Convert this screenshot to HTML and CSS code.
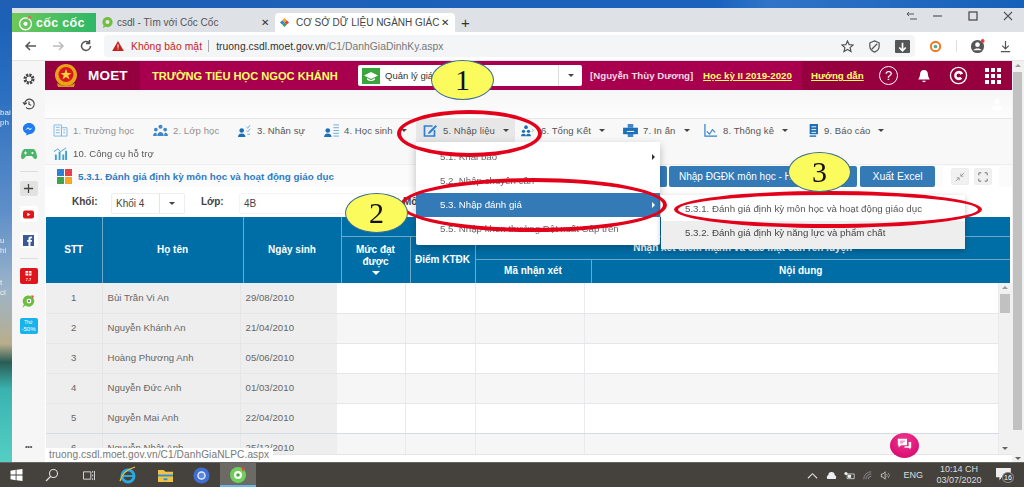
FILE: index.html
```html
<!DOCTYPE html>
<html lang="vi">
<head>
<meta charset="utf-8">
<title>CƠ SỞ DỮ LIỆU NGÀNH GIÁO DỤC</title>
<link rel="stylesheet" href="styles.css">
</head>
<body>
<div class="desktop">
  <div class="top-strip"></div>
  <div class="work">
    <div class="wall"><span class="w1">bai<br>ph</span><span class="w2">u<br>hi</span><span class="w3">t<br>cl</span></div>
    <div class="browser">
      <div class="tabs">
        <div class="brand"><svg class="brand-ic" viewBox="0 0 20 20"><circle cx="10" cy="11" r="7" fill="none" stroke="#fff" stroke-width="1.600"/><circle cx="10" cy="11" r="2.500" fill="#fff"/><path d="M12 5l3-4 2 3z" fill="#f55"/></svg><span>cốc cốc</span></div>
        <div class="tab"><svg class="tab-ic" viewBox="0 0 14 14"><circle cx="7" cy="6.500" r="5.500" fill="#6fbf3f"/><circle cx="7" cy="6.500" r="2.200" fill="#e8e8e8"/><path d="M3 10l-1 3 3-1.500z" fill="#6fbf3f"/></svg><span class="tab-t">csdl - Tìm với Cốc Cốc</span><span class="x">✕</span></div>
        <div class="tab on"><svg class="tab-ic small" viewBox="0 0 10 10"><path d="M5 0l2.500 2.500L5 5 2.500 2.500z" fill="#f5a623"/><path d="M5 5l2.500-2.500L10 5 7.500 7.500z" fill="#e8404a"/><path d="M5 5l2.500 2.500L5 10 2.500 7.500z" fill="#3fa34d"/><path d="M0 5l2.500-2.500L5 5 2.500 7.500z" fill="#2f80d0"/></svg><span class="tab-t">CƠ SỞ DỮ LIỆU NGÀNH GIÁC</span><span class="x">✕</span></div>
        <span class="plus">+</span>
        <div class="win-ctl">
          <svg class="wc-first" viewBox="0 0 12 10"><path d="M1 3h7M3 1L1 3l2 2M4 8h7" fill="none" stroke="#555" stroke-width="1"/></svg>
          <svg viewBox="0 0 12 10"><path d="M1 5h9" stroke="#555" stroke-width="1.200"/></svg>
          <svg viewBox="0 0 12 10"><rect x="2" y="1" width="8" height="8" fill="none" stroke="#444" stroke-width="1.200"/></svg>
          <svg viewBox="0 0 12 10"><path d="M2 1l8 8M10 1l-8 8" stroke="#555" stroke-width="1.100"/></svg>
        </div>
      </div>
      <div class="toolbar">
        <svg class="nav-ic" viewBox="0 0 14 14"><path d="M12 7H2M6 3L2 7l4 4" fill="none" stroke="#555" stroke-width="1.500"/></svg>
        <svg class="nav-ic" viewBox="0 0 14 14"><path d="M2 7h10M8 3l4 4-4 4" fill="none" stroke="#bbb" stroke-width="1.500"/></svg>
        <svg class="nav-ic" viewBox="0 0 14 14"><path d="M11.500 7A4.500 4.500 0 1 1 10 3.600M10.500 1v3.500H7" fill="none" stroke="#555" stroke-width="1.500"/></svg>
        <div class="omni">
          <svg class="warn" viewBox="0 0 14 12"><path d="M7 0l7 12H0z" fill="#c5221f"/><path d="M6.400 4h1.200v4H6.400zM6.400 9h1.200v1.200H6.400z" fill="#fff"/></svg>
          <span class="insecure">Không bảo mật</span><i class="sep"></i>
          <span class="url"><b>truong.csdl.moet.gov.vn</b>/C1/DanhGiaDinhKy.aspx</span>
          <svg class="o-ic" viewBox="0 0 14 14"><path d="M7 1l1.800 4 4.200.4-3.200 2.800 1 4.200L7 10.200 3.200 12.400l1-4.200L1 5.400 5.200 5z" fill="none" stroke="#555" stroke-width="1.300"/></svg>
          <svg class="o-ic" viewBox="0 0 14 14"><path d="M7 1l5 2v4c0 3-2.500 5-5 6-2.500-1-5-3-5-6V3zM4 10l6-6" fill="none" stroke="#555" stroke-width="1.300"/></svg>
          <span class="dl-tile"><svg viewBox="0 0 14 14"><path d="M7 2v8M3.500 7L7 10.500 10.500 7" fill="none" stroke="#fff" stroke-width="1.800"/></svg></span>
        </div>
        <svg class="ext" viewBox="0 0 14 14"><circle cx="7" cy="7" r="5" fill="none" stroke="#ef7d22" stroke-width="2.200"/><circle cx="7" cy="7" r="2" fill="#5a9"/></svg>
        <i class="sep2"></i>
        <svg class="ext prof" viewBox="0 0 16 16"><circle cx="8" cy="8" r="7" fill="#555"/><circle cx="8" cy="6" r="2.500" fill="#fff"/><path d="M3.500 12c1.500-2.500 7.500-2.500 9 0" fill="#fff"/><circle cx="13.500" cy="2" r="2" fill="#f33"/></svg>
        <svg class="ext" viewBox="0 0 14 14"><path d="M7 1v8M3.500 6L7 9.500 10.500 6M2 12.500h10" fill="none" stroke="#555" stroke-width="1.300"/></svg>
      </div>
      <div class="viewport">
        <aside class="side">
          <svg class="s-ic" viewBox="0 0 16 16"><circle cx="8" cy="8" r="5" fill="none" stroke="#444" stroke-width="2.600" stroke-dasharray="2.500 1.400"/><circle cx="8" cy="8" r="3.500" fill="none" stroke="#444" stroke-width="1.100"/></svg>
          <svg class="s-ic" viewBox="0 0 16 16"><path d="M3 8a5.500 5.500 0 1 1 1.600 3.900M1 6l2 2.500L5.500 6.500M8 5v3.500l2.500 1" fill="none" stroke="#444" stroke-width="1.300"/></svg>
          <svg class="s-ic" viewBox="0 0 16 16"><path d="M8 1c4 0 7 2.800 7 6.500S12 14 8 14l-3 1.500V13C2.500 12 1 10 1 7.500 1 3.800 4 1 8 1z" fill="#1e7bf2"/><path d="M3.500 9.500L7 6l2 2 3.500-2L9 9.500 7 7.500z" fill="#fff"/></svg>
          <svg class="s-ic wide" viewBox="0 0 16 12"><path d="M4 1h8c2 0 3 2 4 7 .3 3-2 4-3.500 2L11 8H5l-1.500 2C2 12-.3 11 0 8c1-5 2-7 4-7z" fill="#4cb56a"/><path d="M3 5h3M4.500 3.500v3" stroke="#fff" stroke-width="1"/><circle cx="11.500" cy="5" r="1.100" fill="#fff"/></svg>
          <i class="s-sep"></i>
          <span class="tile gray"><svg viewBox="0 0 12 12"><path d="M6 1v10M1 6h10" stroke="#444" stroke-width="1.400"/></svg></span>
          <span class="tile white"><svg viewBox="0 0 14 10"><rect width="14" height="10" rx="2.500" fill="#e0161b"/><path d="M5.500 2.800L9.500 5l-4 2.200z" fill="#fff"/></svg></span>
          <span class="tile white"><svg viewBox="0 0 14 14"><rect width="14" height="14" fill="#3b5998"/><path d="M9.500 14V8.500h1.800l.3-2.200H9.500V5c0-.7.3-1 1-1h1.100V2.100C11 2 10.400 2 9.800 2 8 2 7 3 7 4.800v1.500H5.200v2.200H7V14z" fill="#fff"/></svg></span>
          <i class="s-sep"></i>
          <span class="tile red"><svg viewBox="0 0 12 10"><path d="M2 1h8v6H2z" fill="#fff"/><path d="M6 1v6M2 4h8" stroke="#e01b1b" stroke-width="1"/></svg><em>7.7</em></span>
          <svg class="s-ic wide2" viewBox="0 0 16 16"><path d="M8 1.500a6 6 0 1 1-3.500 10.800L1.500 15l1.500-4A6 6 0 0 1 8 1.500z" fill="#6cbf3c"/><circle cx="8.500" cy="7.500" r="2.500" fill="#fff"/><circle cx="8.500" cy="7.500" r="1" fill="#555"/><path d="M11 1l3 1-2 3z" fill="#e55"/></svg>
          <span class="tile sale"><span>Thứ<br><b>-50%</b></span></span>
          <span class="more">•••</span>
        </aside>
        <main class="page">
          <header class="head">
            <div class="logo">
              <svg class="emblem" viewBox="0 0 26 26"><circle cx="13" cy="12" r="11" fill="#e8a317"/><circle cx="13" cy="11.500" r="7.500" fill="#d8171c"/><path d="M13 6l1.500 4h4l-3.300 2.400 1.300 4L13 14l-3.500 2.400 1.300-4L7.500 10h4z" fill="#ffd23c"/><path d="M4 20c5 4 13 4 18 0l-1 4H5z" fill="#d99a17"/></svg>
              <span>MOET</span>
            </div>
            <div class="school">TRƯỜNG TIỂU HỌC NGỌC KHÁNH</div>
            <div class="pick">
              <span class="cap-ic"><svg viewBox="0 0 16 12"><path d="M8 1l8 4-8 4-8-4z" fill="#fff"/><path d="M3.500 8v2c2.500 2 6.500 2 9 0V8L8 10.500z" fill="#fff"/></svg></span>
              <span class="pick-t">Quản lý giáo dục tiểu học</span>
              <span class="pick-c"><i class="caret dark"></i></span>
            </div>
            <span class="who">[Nguyễn Thùy Dương]</span>
            <a class="term">Học kỳ II 2019-2020</a>
            <div class="h-right">
              <a class="guide">Hướng dẫn</a>
              <span class="help">?</span>
              <svg class="h-ic" viewBox="0 0 16 16"><path d="M8 1c3 0 4.500 2.200 4.500 5 0 3 1.500 4.500 2 6h-13c.5-1.500 2-3 2-6C3.500 3.200 5 1 8 1z" fill="#fff"/><path d="M6 13.500h4c0 2.200-4 2.200-4 0z" fill="#fff"/></svg>
              <svg class="h-ic big" viewBox="0 0 20 20"><circle cx="10" cy="10" r="8.500" fill="none" stroke="#fff" stroke-width="1.400"/><path d="M15 8A5 5 0 1 0 14 13.500L10 10z" fill="#fff"/><circle cx="10" cy="10" r="2" fill="#97003f"/></svg>
              <div class="dots"><i></i><i></i><i></i><i></i><i></i><i></i><i></i><i></i><i></i></div>
            </div>
          </header>
          <div class="blank"><svg class="ghost" viewBox="0 0 14 14"><circle cx="7" cy="4" r="3" fill="#fff"/><path d="M1 14c0-7 12-7 12 0z" fill="#fff"/></svg></div>
          <nav class="menu">
            <a class="mi dim m1"><svg viewBox="0 0 16 14"><path d="M1 1h8v12H1zM9 4h6v9H9z" fill="none" stroke="#7db8e0" stroke-width="1"/><path d="M3 3h4v1H3zM3 6h4v1H3zM3 9h4v1H3zM11 6h2v1h-2zM11 9h2v1h-2z" fill="#7db8e0"/></svg>1. Trường học</a>
            <a class="mi dim m2"><svg viewBox="0 0 16 14"><circle cx="8" cy="3" r="2.200" fill="#3f88c5"/><circle cx="3" cy="6" r="2" fill="#3f88c5"/><circle cx="13" cy="6" r="2" fill="#3f88c5"/><path d="M4.500 13c0-6 7-6 7 0zM0 13c0-4.500 4-4.500 4-2v2zM16 13c0-4.500-4-4.500-4-2v2z" fill="#3f88c5"/></svg>2. Lớp học</a>
            <a class="mi m3"><svg viewBox="0 0 16 14"><circle cx="5" cy="7" r="2.500" fill="#1e6fb5"/><path d="M1 14c0-5 8-5 8 0z" fill="#1e6fb5"/><path d="M10 3l1.500 1.500L14 1M10 7l1.500 1.500L14 5M11 11h3" fill="none" stroke="#6aa9d8" stroke-width="1"/></svg>3. Nhân sự</a>
            <a class="mi m4"><svg viewBox="0 0 16 14"><circle cx="4" cy="7" r="2.500" fill="#1e6fb5"/><path d="M0 14c0-5 8-5 8 0z" fill="#1e6fb5"/><path d="M10 1h6M10 4h6M10 7h6M10 10h6M10 13h6" stroke="#6aa9d8" stroke-width="1"/></svg>4. Học sinh<i class="caret"></i></a>
            <a class="mi active m5"><svg viewBox="0 0 14 13"><path d="M9 2H1v10h10V6" fill="none" stroke="#2f80d0" stroke-width="1.700"/><path d="M5 8l7-7 1.500 1.500-7 7L4.500 10z" fill="#2f80d0"/></svg>5. Nhập liệu<i class="caret"></i></a>
            <a class="mi m6"><svg viewBox="0 0 18 14"><circle cx="6" cy="3" r="2.200" fill="#1e6fb5"/><circle cx="3" cy="8" r="2" fill="#1e6fb5"/><circle cx="9" cy="8" r="2" fill="#1e6fb5"/><path d="M0 14c0-4 6-4 6 0zM6 14c0-4 6-4 6 0z" fill="#1e6fb5"/><path d="M13 5l2 2-2 2" fill="none" stroke="#7db8e0"/></svg>6. Tổng Kết<i class="caret"></i></a>
            <a class="mi m7"><svg viewBox="0 0 16 14"><path d="M5 0h6v4H5zM5 10h6v4H5z" fill="#3f88c5"/><path d="M0 4h16v7H0z" fill="#1e6fb5"/><path d="M4 8h8" stroke="#fff"/></svg>7. In ấn<i class="caret"></i></a>
            <a class="mi m8"><svg viewBox="0 0 14 14"><path d="M1 0v13h13" fill="none" stroke="#2f80d0" stroke-width="1.300"/><path d="M3 8l3 3 3-5 3 3" fill="none" stroke="#2f80d0" stroke-width="1.200"/></svg>8. Thống kê<i class="caret"></i></a>
            <a class="mi m9"><svg viewBox="0 0 14 14"><path d="M5 0h9v11H5z" fill="#1e6fb5"/><path d="M1 3h4v11h7v-2H5V3z" fill="#3f88c5"/><path d="M7 3h5M7 6h5M7 9h5" stroke="#fff"/></svg>9. Báo cáo<i class="caret"></i></a>
            <a class="mi m10"><svg viewBox="0 0 14 14"><path d="M1 8h2v6H1zM5 5h2v9H5zM9 8h2v6H9zM12 4h2v10h-2z" fill="#39a0d8"/><path d="M0 5l4-3 3 3 6-4" fill="none" stroke="#39a0d8"/></svg>10. Công cụ hỗ trợ</a>
          </nav>
          <div class="titlebar">
            <span class="squares"><i class="q1"></i><i class="q2"></i><i class="q3"></i><i class="q4"></i></span>
            <span class="ttl">5.3.1. Đánh giá định kỳ môn học và hoạt động giáo dục</span>
            <div class="actions">
              <span class="btn b0"></span>
              <button class="btn b1">Nhập ĐGĐK môn học - Học sinh</button>
              <button class="btn b2">Xuất Excel</button>
              <div class="tools">
                <span class="tool"><svg viewBox="0 0 12 12"><path d="M1 11l4-4M5 7H2M5 7v3M11 1L7 5M7 5h3M7 5V2" fill="none" stroke="#999" stroke-width="1.100"/></svg></span>
                <span class="tool"><svg viewBox="0 0 12 12"><path d="M1 4V1h3M8 1h3v3M11 8v3H8M4 11H1V8" fill="none" stroke="#777" stroke-width="1.200"/></svg></span>
              </div>
            </div>
          </div>
          <div class="filters">
            <label class="lab l1">Khối:</label>
            <div class="sel s1"><span>Khối 4</span><span class="sel-c"><i class="caret dark"></i></span></div>
            <label class="lab l2">Lớp:</label>
            <div class="sel s2"><span>4B</span></div>
            <label class="lab l3">Môn:</label>
          </div>
          <table class="thead">
            <colgroup><col class="c1"><col class="c2"><col class="c3"><col class="c4"><col class="c5"><col class="c6"><col class="c7"></colgroup>
            <tr class="r1"><th rowspan="3">STT</th><th rowspan="3">Họ tên</th><th rowspan="3">Ngày sinh</th><th colspan="4"></th></tr>
            <tr class="r2"><th rowspan="2">Mức đạt<br>được<i class="down"></i></th><th rowspan="2">Điểm KTĐK</th><th colspan="2">Nhận xét điểm mạnh và các mặt cần rèn luyện</th></tr>
            <tr class="r3"><th>Mã nhận xét</th><th>Nội dung</th></tr>
          </table>
          <div class="tbody-wrap">
            <table class="tbody">
              <colgroup><col class="d1"><col class="d2"><col class="d3"><col class="d4"><col class="d5"><col class="d6"><col class="d7"></colgroup>
              <tr><td class="f ctr">1</td><td class="f">Bùi Trần Vi An</td><td class="f">29/08/2010</td><td></td><td></td><td></td><td></td></tr>
              <tr><td class="f ctr">2</td><td class="f">Nguyễn Khánh An</td><td class="f">21/04/2010</td><td></td><td></td><td></td><td></td></tr>
              <tr><td class="f ctr">3</td><td class="f">Hoàng Phương Anh</td><td class="f">05/06/2010</td><td></td><td></td><td></td><td></td></tr>
              <tr><td class="f ctr">4</td><td class="f">Nguyễn Đức Anh</td><td class="f">01/03/2010</td><td></td><td></td><td></td><td></td></tr>
              <tr><td class="f ctr">5</td><td class="f">Nguyễn Mai Anh</td><td class="f">22/04/2010</td><td></td><td></td><td></td><td></td></tr>
              <tr class="last"><td class="f ctr">6</td><td class="f">Nguyễn Nhật Anh</td><td class="f">25/12/2010</td><td></td><td></td><td></td><td></td></tr>
            </table>
            <div class="inner-sb"><i class="up"></i><b></b><i class="dn"></i></div>
          </div>
        </main>
        <div class="page-sb"><i class="up"></i><b></b><i class="dn"></i></div>
      </div>
    </div>
  </div>
  <footer class="taskbar">
    <svg class="t-win" viewBox="0 0 14 14"><path d="M0 2l6-1v5.500H0zM7 1l7-1v6.500H7zM0 7.500h6V13l-6-1zM7 7.500h7V14l-7-1z" fill="#fff"/></svg>
    <svg class="t-ic search" viewBox="0 0 14 14"><circle cx="8.500" cy="5.500" r="4" fill="none" stroke="#ddd" stroke-width="1.100"/><path d="M5.500 8.500L1 13" stroke="#ddd" stroke-width="1.200"/></svg>
    <svg class="t-ic view" viewBox="0 0 14 12"><path d="M1 2h8v8H1zM11 1v2M11 5v2M11 9v2M13 1v10" fill="none" stroke="#ddd"/></svg>
    <svg class="t-ic ie" viewBox="0 0 18 18"><circle cx="9" cy="10" r="6" fill="none" stroke="#2aa9e0" stroke-width="3"/><path d="M4 10h11" stroke="#2aa9e0" stroke-width="2"/><path d="M1 15C3 8 9 3 16 1" fill="none" stroke="#f2c230" stroke-width="1.300"/></svg>
    <svg class="t-ic folder" viewBox="0 0 18 16"><path d="M1 2h6l2 2h8v11H1z" fill="#f2c244"/><path d="M1 7h16v2H1z" fill="#2a8fd8"/><path d="M7 11h4v2H7z" fill="#2a8fd8"/></svg>
    <svg class="t-ic chrome" viewBox="0 0 18 18"><circle cx="9" cy="9" r="8.500" fill="#3f6fd1"/><circle cx="9" cy="9" r="4.500" fill="#fff" opacity=".85"/><circle cx="9" cy="9" r="3" fill="#5b87e0"/></svg>
    <span class="t-active"><svg viewBox="0 0 18 18"><circle cx="9" cy="9" r="8" fill="#6fcf5a"/><circle cx="9" cy="9" r="4" fill="#fff"/><circle cx="9" cy="9" r="1.800" fill="#4a4"/><path d="M12 1l4 1-2 4z" fill="#e44"/></svg></span>
    <div class="tray">
      <svg class="tr chev" viewBox="0 0 12 8"><path d="M1 7l5-5 5 5" fill="none" stroke="#ddd" stroke-width="1.200"/></svg>
      <svg class="tr" viewBox="0 0 14 9"><path d="M2 9a3 3 0 0 1 1-5 4 4 0 0 1 8 0 3 3 0 0 1 1 5z" fill="#eee"/></svg>
      <svg class="tr" viewBox="0 0 14 10"><path d="M4 3h9v6H4z" fill="none" stroke="#ddd"/><path d="M5 4h4v4H5z" fill="#eee"/><circle cx="2.500" cy="2.500" r="2" fill="#eee"/></svg>
      <svg class="tr" viewBox="0 0 12 12"><path d="M1 11a10 10 0 0 1 10-10M4 11a7 7 0 0 1 7-7M7 11a4 4 0 0 1 4-4" fill="none" stroke="#999" stroke-width="1.100"/></svg>
      <svg class="tr" viewBox="0 0 13 12"><path d="M1 4h2l3-3v10L3 8H1z" fill="none" stroke="#ddd"/><path d="M8 4a3 3 0 0 1 0 4M10 2.500a5 5 0 0 1 0 7" fill="none" stroke="#aaa"/></svg>
      <span class="eng">ENG</span>
      <span class="clock">10:14 CH<br>03/07/2020</span>
      <span class="notif"><svg viewBox="0 0 14 12"><path d="M0 0h13v8H5L3 11V8H0z" fill="#eee"/></svg><em>16</em></span>
    </div>
  </footer>
  <div class="bottom-strip"></div>

  <div class="dropdown">
    <div class="dd">5.1. Khai báo<i class="arrow"></i></div>
    <div class="dd">5.2. Nhập chuyên cần</div>
    <div class="dd sel-dd">5.3. Nhập đánh giá<i class="arrow w"></i></div>
    <div class="dd">5.5. Nhập khen thưởng Đột xuất Cấp trên</div>
  </div>
  <div class="submenu">
    <div class="sd">5.3.1. Đánh giá định kỳ môn học và hoạt động giáo dục</div>
    <div class="sd hov">5.3.2. Đánh giá định kỳ năng lực và phẩm chất</div>
  </div>
  <span class="ring ra"></span>
  <span class="ring rb"></span>
  <span class="ring rc"></span>
  <span class="bubble b-1">1</span>
  <span class="bubble b-2">2</span>
  <span class="bubble b-3">3</span>
  <div class="tip">truong.csdl.moet.gov.vn/C1/DanhGiaNLPC.aspx</div>
  <span class="chat"><svg viewBox="0 0 20 18"><path d="M2 2h11v8H6l-3 2.500V10H2z" fill="#fff"/><path d="M15 6h3v7h-1v2l-2-2h-5v-2h5z" fill="#fff"/><path d="M4.500 4.500h6v1h-6zM4.500 6.500h4v1h-4z" fill="#e9408f"/></svg></span>
</div>
</body>
</html>
```
FILE: styles.css
```css
* { box-sizing: border-box; }
html, body { margin: 0; padding: 0; width: 1024px; height: 489px; overflow: hidden; background: #fff; }
body, button, table { font-family: "Liberation Sans", Arial, sans-serif; font-size: 10px; }
svg { display: block; flex: none; }
i, em { font-style: normal; }

.desktop { position: relative; width: 1024px; height: 489px; display: flex; flex-direction: column; overflow: hidden; filter: blur(.5px); }
.top-strip { height: 8px; flex: none; background: linear-gradient(90deg, #1f5fb4, #1a63bd 70%, #2f74c8 75%, #1560b8); }
.work { height: 454px; flex: none; display: flex; }
.wall { width: 12px; flex: none; position: relative; overflow: hidden; font-size: 8px; line-height: 10px; color: #eee; background: linear-gradient(180deg, #1b5fb6 0, #2a6ec0 18%, #5f8fc9 45%, #9db4c9 62%, #b8ad8c 74%, #2a5c56 78%, #3ab3b0 84%, #55cfc4 100%); }
.wall span { position: absolute; left: 0; white-space: nowrap; }
.w1 { top: 100px; } .w2 { top: 228px; } .w3 { top: 270px; }

.browser { width: 1012px; flex: none; display: flex; flex-direction: column; background: #fff; }
.tabs { height: 24px; flex: none; display: flex; background: #dee1e6; }
.brand { width: 84px; display: flex; align-items: center; gap: 2px; padding-left: 5px; margin-top: 5px; background: linear-gradient(90deg, #6fc85a, #2db868); color: #fff; font: bold 12.500px "Liberation Sans", sans-serif; letter-spacing: .3px; white-space: nowrap; }
.brand-ic { width: 17px; height: 18px; }
.tab { width: 179px; display: flex; align-items: center; margin-top: 5px; padding: 0 6px 0 5px; color: #555; font-size: 10px; white-space: nowrap; }
.tab.on { background: #fff; color: #444; border-radius: 4px 4px 0 0; width: 180px; }
.tab-ic { width: 13px; height: 13px; margin-right: 3px; }
.tab-ic.small { width: 9px; height: 9px; margin: 0 7px 0 0; }
.tab-t { flex: 1; overflow: visible; }
.x { font-size: 10px; color: #333; }
.plus { margin: 5px 0 0 6px; font-size: 15px; line-height: 19px; color: #333; }
.win-ctl { margin-left: auto; display: flex; align-items: center; gap: 23px; padding: 0 10px 8px 0; }
.win-ctl svg { width: 12px; height: 10px; }
.win-ctl .wc-first { margin-right: -9px; }
.toolbar { height: 29px; flex: none; display: flex; align-items: center; padding: 0 10px 0 0; background: #fff; border-bottom: 1px solid #e4e4e4; }
.nav-ic { width: 14px; height: 14px; margin-left: 12px; }
.nav-ic:nth-child(2) { margin-left: 13px; }
.nav-ic:nth-child(3) { margin-left: 14px; }
.omni { width: 811px; height: 22px; margin-left: 11px; display: flex; align-items: center; padding-left: 8px; background: #f4f5f6; border-radius: 4px; font-size: 10.300px; white-space: nowrap; }
.warn { width: 12px; height: 10px; margin-right: 7px; }
.insecure { color: #c5221f; font-size: 10.300px; letter-spacing: .1px; }
.sep { width: 1px; height: 12px; background: #aaa; margin: 0 7px 0 6px; }
.url { flex: 1; color: #777; letter-spacing: .05px; }
.url b { font-weight: normal; color: #333; }
.o-ic { width: 13px; height: 13px; margin-right: 14px; }
.dl-tile { width: 15px; height: 13px; background: #555; border-radius: 1px; margin-right: 5px; padding: 1px; }
.ext { width: 13px; height: 13px; margin-left: 14px; }
.sep2 { width: 1px; height: 12px; background: #ddd; margin-left: 14px; }
.prof { width: 15px; height: 15px; margin-left: 13px; }

.viewport { flex: 1; min-height: 0; display: flex; }
.side { width: 33px; flex: none; display: flex; flex-direction: column; align-items: center; background: #f6f6f6; padding-top: 11px; position: relative; }
.s-ic { width: 14px; height: 14px; margin-bottom: 11px; }
.s-ic.wide { width: 16px; height: 12px; margin: 1px 0 11px; }
.s-sep { width: 18px; height: 1px; background: #ddd; margin: 0 0 9px; }
.tile { width: 18px; height: 15px; border-radius: 2px; margin-bottom: 10px; display: flex; align-items: center; justify-content: center; }
.tile svg { width: 11px; height: 11px; }
.tile.gray { background: #e2e2e0; }
.tile.white { background: #fff; height: 16px; }
.tile.red { background: #e0141c; height: 16px; flex-direction: column; gap: 0; color: #ffd; font-size: 4px; font-weight: bold; line-height: 4px; }
.tile.red svg { width: 9px; height: 8px; }
.s-ic.wide2 { width: 15px; height: 15px; margin-bottom: 9px; }
.tile.sale { background: #17b3ec; height: 16px; color: #fff; font-size: 4.500px; line-height: 6px; text-align: center; }
.tile.sale b { font-size: 6px; font-weight: normal; }
.more { position: absolute; top: 381px; left: 0; width: 33px; text-align: center; font-size: 8px; color: #555; letter-spacing: -.5px; }

.page { flex: 1; min-width: 0; display: flex; flex-direction: column; background: #fff; }
.head { height: 29px; flex: none; display: flex; align-items: center; background: #a8004e; color: #fff; }
.logo { width: 95px; height: 100%; background: #95003f; display: flex; align-items: center; padding-left: 8px; gap: 9px; font-size: 13.500px; font-weight: bold; letter-spacing: .2px; }
.emblem { width: 26px; height: 26px; }
.school { margin-left: 12px; width: 206px; color: #ffff66; font-size: 11.100px; font-weight: bold; white-space: nowrap; }
.pick { width: 224px; height: 21px; display: flex; align-items: center; background: #fff; border-radius: 2px; color: #333; font-size: 9.500px; padding-left: 4px; }
.cap-ic { width: 18px; height: 16px; background: #3aa53a; padding: 3px 2px; margin-right: 5px; }
.pick-t { flex: 1; }
.pick-c { width: 24px; height: 100%; border-left: 1px solid #ddd; display: flex; align-items: center; justify-content: center; }
.who { margin-left: 8px; width: 113px; font-size: 9.700px; font-weight: bold; color: #f1d9e3; white-space: nowrap; }
.term { width: 99px; font-size: 9.700px; font-weight: bold; color: #ffff66; text-decoration: underline; white-space: nowrap; }
.h-right { flex: 1; height: 100%; display: flex; align-items: center; background: #97003f; padding-left: 9px; }
.guide { width: 68px; font-size: 9.700px; font-weight: bold; color: #ffff66; text-decoration: underline; white-space: nowrap; }
.help { width: 19px; height: 19px; border: 1.300px solid #fff; border-radius: 50%; font-size: 13px; line-height: 17px; text-align: center; }
.h-ic { width: 14px; height: 14px; margin-left: 19px; }
.h-ic.big { width: 19px; height: 19px; margin-left: 18px; }
.dots { width: 16px; margin-left: 17px; display: grid; grid-template-columns: repeat(3, 4px); gap: 2px; }
.dots i { height: 4px; background: #fff; }

.blank { height: 28px; flex: none; background: linear-gradient(180deg, #f6f6f6, #fdfdfd); display: flex; align-items: center; justify-content: flex-end; padding-right: 9px; }
.ghost { width: 12px; height: 12px; }

.menu { height: 47px; flex: none; display: block; position: relative; background: #f8f8f8; border-top: 1px solid #e7e7e7; border-bottom: 1px solid #eee; color: #555; }
.mi { position: absolute; top: 0; height: 23px; display: flex; align-items: center; font-size: 9.500px; white-space: nowrap; letter-spacing: .1px; }
.mi svg { width: 15px; height: 13px; margin-right: 5px; }
.mi.dim { color: #909090; }
.mi.active { background: #e7e7e7; }
.caret { display: inline-block; width: 0; height: 0; border: 3.500px solid transparent; border-top: 3.500px solid #444; border-bottom: 0; }
.mi .caret { margin-left: 8px; }
.m1 { left: 8px; } .m2 { left: 108px; } .m3 { left: 192px; } .m4 { left: 279px; }
.m5 { left: 371px; width: 99px; padding-left: 7px; } .m6 { left: 476px; } .m7 { left: 578px; } .m8 { left: 658px; } .m9 { left: 759px; }
.m10 { left: 8px; top: 23px; }

.titlebar { height: 22px; flex: none; display: flex; align-items: center; padding-left: 12px; background: #fbfbfb; position: relative; }
.squares { width: 15px; height: 15px; display: grid; grid-template-columns: 1fr 1fr; gap: 1px; margin-right: 6px; }
.q1 { background: #2f80d0; } .q2 { background: #e8404a; } .q3 { background: #3fa34d; } .q4 { background: #f5a623; }
.ttl { color: #2e7bc4; font-size: 9.800px; font-weight: bold; white-space: nowrap; }
.actions { margin-left: auto; display: flex; align-items: center; padding-right: 13px; height: 100%; }
.btn { height: 21px; border: 0; padding: 0; border-radius: 2px; background: #337ab7; color: #fff; font-size: 10px; white-space: nowrap; overflow: hidden; }
.b0 { width: 20px; margin-right: 2px; }
.b1 { width: 188px; margin-right: 3px; text-align: left; padding-left: 10px; }
.b2 { width: 75px; margin-right: 8px; font-size: 10.500px; }
.tools { width: 56px; height: 21px; background: #fff; display: flex; gap: 5px; justify-content: center; align-items: center; }
.tool { width: 18px; height: 17px; border-radius: 2px; background: #f1f1f1; padding: 3px; border: 1px solid #eee; }

.filters { height: 30px; flex: none; position: relative; background: #fff; color: #444; }
.lab { position: absolute; top: 9px; font-weight: bold; font-size: 10px; }
.l1 { left: 27px; } .l2 { left: 156px; } .l3 { left: 358px; }
.sel { position: absolute; top: 6px; height: 21px; display: flex; align-items: center; padding-left: 4px; background: #fff; border: 1px solid #eee; border-radius: 2px; font-size: 10px; }
.s1 { left: 66px; width: 74px; }
.s1 span:first-child { flex: 1; }
.sel-c { width: 25px; height: 100%; border-left: 1px solid #e5e5e5; display: flex; align-items: center; justify-content: center; }
.s2 { left: 194px; width: 160px; border-color: #f4f4f4; }

table { border-collapse: collapse; table-layout: fixed; border-spacing: 0; }
.thead { width: 964px; flex: none; margin-left: 1px; background: #006ea6; color: #fff; }
.thead th { border: 1px solid #6fa8c8; font-size: 10px; font-weight: bold; padding: 0; text-align: center; line-height: 12px; border-top: 0; border-bottom: 0; }
.thead tr + tr th { border-top: 1px solid #6fa8c8; }
.thead th:first-child { border-left: 0; }
.thead .r1 th:last-child, .thead .r2 th:last-child, .thead .r3 th:last-child { border-right: 0; }
.r1 { height: 19px; } .r2 { height: 23px; } .r3 { height: 24px; }
.c1 { width: 56px; } .c2 { width: 141px; } .c3 { width: 98px; } .c4 { width: 69px; } .c5 { width: 65px; } .c6 { width: 116px; } .c7 { width: 419px; }
.down { display: block; width: 0; height: 0; margin: 3px auto 0; border: 4px solid transparent; border-top: 4px solid #fff; border-bottom: 0; }

.tbody-wrap { height: 172px; flex: none; display: flex; overflow: hidden; margin-left: 1px; border-bottom: 1px solid #e6e6e6; background: #f4f4f4; }
.tbody { width: 952px; flex: none; height: 180px; color: #666; }
.d1 { width: 56px; } .d2 { width: 138px; } .d3 { width: 97px; } .d4 { width: 68px; } .d5 { width: 70px; } .d6 { width: 109px; } .d7 { width: 414px; }
.tbody tr { height: 30px; }
.tbody td { padding: 0 0 1px 5px; border-right: 1px solid #e9e9ee; border-bottom: 1px solid #e6e6ea; background: #fff; font-size: 9.600px; letter-spacing: .05px; }
.tbody tr:nth-child(even) td { background: #f6f6f6; }
.tbody td.f, .tbody tr:nth-child(even) td.f { background: #eee; border-color: #e6e6e6; }
.tbody td.f:nth-child(3) { border-right: 0; }
.tbody td.ctr { text-align: center; padding-left: 0; }
.tbody tr:nth-child(5) td { border-bottom-color: #d5dbe6; }
.inner-sb { width: 13px; flex: none; background: #f1f1f1; position: relative; }
.inner-sb b { position: absolute; top: 11px; left: 1px; width: 10px; height: 19px; background: #c1c1c1; }
.up, .dn { position: absolute; left: 50%; margin-left: -3px; width: 0; height: 0; border: 3px solid transparent; }
.up { top: 3px; border-bottom: 3px solid #999; border-top: 0; }
.dn { bottom: 4px; border-top: 3px solid #666; border-bottom: 0; }

.page-sb { width: 12px; flex: none; background: #f1f1f1; position: relative; }
.page-sb b { position: absolute; top: 11px; left: 1px; width: 9px; height: 358px; background: #c1c1c1; }
.page-sb .dn { bottom: 2px; }

.taskbar { height: 25px; flex: none; position: relative; display: flex; align-items: center; background: #45423d; border-top: 1px solid #666; }
.t-win { width: 13px; height: 12px; margin-left: 10px; }
.t-ic { width: 14px; height: 14px; }
.search { margin-left: 22px; }
.view { margin-left: 23px; height: 11px; }
.ie { margin-left: 23px; width: 18px; height: 18px; }
.folder { margin-left: 20px; width: 17px; height: 15px; }
.chrome { margin-left: 19px; width: 17px; height: 17px; }
.t-active { margin-left: 10px; width: 36px; height: 100%; background: #6b6a64; border-bottom: 2px solid #6cb0e8; padding: 3px 9px; }
.tray { margin-left: auto; display: flex; align-items: center; color: #ddd; height: 100%; }
.tr { width: 11px; height: 9px; margin-right: 7px; }
.chev { margin-right: 8px; }
.eng { font-size: 9px; margin: 0 10px 0 5px; }
.clock { width: 52px; text-align: center; font-size: 9px; line-height: 11px; }
.notif { position: relative; width: 16px; height: 14px; margin: 0 12px 0 11px; }
.notif em { position: absolute; left: 6px; top: 4px; width: 12px; height: 11px; border-radius: 50%; border: 1px solid #888; background: #45423d; font-size: 7px; line-height: 9px; text-align: center; color: #fff; }
.bottom-strip { height: 2px; flex: none; background: #fff; }

.dropdown { position: absolute; left: 416px; top: 142px; width: 244px; height: 103px; padding: 3px 0 4px; background: #fff; color: #666; box-shadow: 0 3px 8px rgba(0,0,0,.25); border-radius: 0 0 2px 2px; }
.dd { height: 24px; line-height: 24px; padding-left: 24px; font-size: 9.700px; position: relative; }
.sel-dd { background: #337ab7; color: #fff; }
.arrow { position: absolute; right: 5px; top: 9px; width: 0; height: 0; border: 3px solid transparent; border-left: 3.500px solid #333; border-right: 0; }
.arrow.w { border-left-color: #fff; }
.submenu { position: absolute; left: 661px; top: 195px; width: 304px; height: 54px; background: #fff; color: #555; box-shadow: 0 2px 6px rgba(0,0,0,.25); font-size: 9.700px; padding-top: 2px; }
.sd { height: 24px; line-height: 24px; padding-left: 24px; white-space: nowrap; }
.hov { background: #eee; height: 28px; line-height: 24px; color: #444; }

.ring { position: absolute; border: 4px solid #e3001b; border-radius: 50%; }
.ra { left: 397px; top: 110px; width: 145px; height: 47px; }
.rb { left: 400px; top: 178px; width: 267px; height: 54px; }
.rc { left: 674px; top: 191px; width: 308px; height: 37px; }
.bubble { position: absolute; width: 63px; height: 40px; border-radius: 50%; background: #fbfb5e; border: 1.500px solid #3c6e91; color: #111; font: 30px/37px "Liberation Serif", serif; text-align: center; }
.b-1 { left: 431px; top: 60px; }
.b-2 { left: 345px; top: 193px; }
.b-3 { left: 788px; top: 152px; }
.tip { position: absolute; left: 45px; top: 448px; width: 228px; height: 14px; padding-left: 4px; background: #fff; color: #777; font-size: 10.100px; line-height: 14px; white-space: nowrap; letter-spacing: .1px; }
.chat { position: absolute; left: 890px; top: 433px; width: 29px; height: 25px; border-radius: 50%; background: radial-gradient(circle at 50% 30%, #f0388f, #d3006a); padding: 4px 6px; }
.chat svg { width: 17px; height: 15px; }
```
